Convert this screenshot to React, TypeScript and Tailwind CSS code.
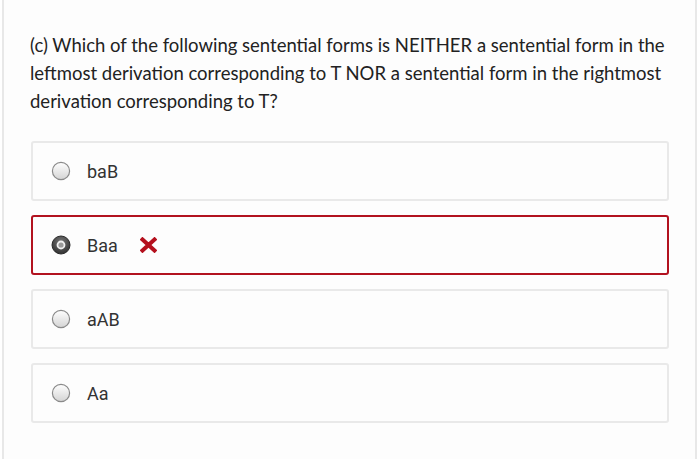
import React from "react";

function Radio({ checked }: { checked?: boolean }) {
  if (checked) {
    return (
      <svg width="20" height="20" viewBox="0 0 20 20" className="shrink-0">
        <defs>
          <radialGradient id="rg1" cx="50%" cy="35%" r="65%">
            <stop offset="0%" stopColor="#7a7a7a" />
            <stop offset="100%" stopColor="#303030" />
          </radialGradient>
        </defs>
        <circle cx="10" cy="10" r="9" fill="url(#rg1)" stroke="#2a2a2a" strokeWidth="1" />
        <circle cx="10" cy="10" r="4.4" fill="#f2f2f2" />
        <circle cx="10" cy="10" r="2.6" fill="#9a9a9a" />
      </svg>
    );
  }
  return (
    <svg width="20" height="20" viewBox="0 0 20 20" className="shrink-0">
      <defs>
        <linearGradient id="lg1" x1="0" y1="0" x2="0" y2="1">
          <stop offset="0%" stopColor="#ffffff" />
          <stop offset="100%" stopColor="#d4d4d4" />
        </linearGradient>
      </defs>
      <circle cx="10" cy="10" r="8.6" fill="url(#lg1)" stroke="#8a8a8a" strokeWidth="1.2" />
    </svg>
  );
}

function Option({ label, selected, wrong }: { label: string; selected?: boolean; wrong?: boolean }) {
  return (
    <div
      className={
        "h-[60px] flex items-center pl-[18px] rounded-[3px] " +
        (selected ? "border-2 border-[#b2121f]" : "border-2 border-[#e9e9e9]")
      }
    >
      <Radio checked={selected} />
      <span
        className="ml-[16px] text-[18px] text-[#333]"
        style={{ fontFamily: "Roboto, 'Liberation Sans', sans-serif" }}
      >
        {label}
      </span>
      {wrong && (
        <svg width="17" height="16" viewBox="0 0 17 16" className="ml-[22px]">
          <path d="M2.5 2.5 L14.5 13.5 M14.5 2.5 L2.5 13.5" stroke="#b4101d" strokeWidth="4" strokeLinecap="square" />
        </svg>
      )}
    </div>
  );
}

export default function App() {
  return (
    <div className="w-[700px] h-[459px] bg-white" style={{ fontFamily: "Lato, 'Open Sans', sans-serif" }}>
      <div className="ml-[2px] w-[695px] h-[459px] border-x-2 border-[#e8e8e8] pl-[26px] pr-[26px] pt-[31px] bg-[#fdfdfd]">
        <p className="text-[18.5px] leading-[28px] text-[#222] pr-[2px]">
          (c) Which of the following sentential forms is NEITHER a sentential form in the leftmost derivation
          corresponding to T NOR a sentential form in the rightmost derivation corresponding to T?
        </p>
        <div className="mt-[26px] flex flex-col gap-[14px] ml-[1px]">
          <Option label="baB" />
          <Option label="Baa" selected wrong />
          <Option label="aAB" />
          <Option label="Aa" />
        </div>
      </div>
    </div>
  );
}
